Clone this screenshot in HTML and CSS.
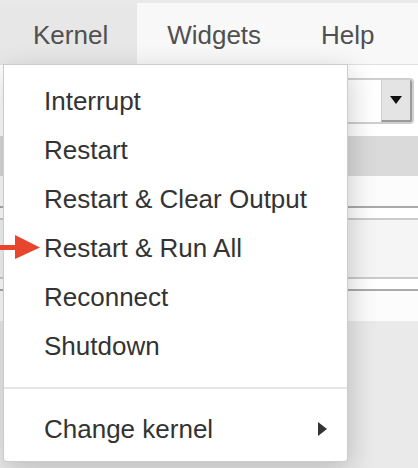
FILE: index.html
```html
<!DOCTYPE html>
<html>
<head>
<meta charset="utf-8">
<link rel="stylesheet" href="styles.css">
</head>
<body>
<div class="page">
  <div class="topline"></div>
  <nav class="navbar">
    <div class="tab open">Kernel
      <ul class="menu">
        <li class="item">Interrupt</li>
        <li class="item">Restart</li>
        <li class="item">Restart &amp; Clear Output</li>
        <li class="item">Restart &amp; Run All</li>
        <li class="item">Reconnect</li>
        <li class="item">Shutdown</li>
        <li class="divider"></li>
        <li class="item submenu"><span>Change kernel</span><span class="caret-right"></span></li>
      </ul>
    </div>
    <div class="tab">Widgets</div>
    <div class="tab">Help</div>
  </nav>
  <div class="toolbar">
    <div class="select">
      <div class="select-field"></div>
      <div class="select-btn"><span class="caret-down"></span></div>
    </div>
  </div>
  <div class="band"></div>
  <div class="cell">
    <div class="gap-top"></div>
    <div class="line-dark"></div>
    <div class="gap-small"></div>
    <div class="line-light"></div>
    <div class="input-area"></div>
    <div class="line-light"></div>
    <div class="gap-small"></div>
    <div class="line-dark"></div>
    <div class="gap-top"></div>
  </div>
  <div class="rest"></div>
</div>
<svg class="pointer" width="42" height="25" viewBox="0 0 42 25">
  <rect x="0" y="10" width="17" height="5" fill="#e8452f"/>
  <polygon points="15,0 40,12.5 15,24" fill="#e8452f"/>
</svg>
</body>
</html>
```

FILE: styles.css
```css
* {
  box-sizing: border-box;
  margin: 0;
  padding: 0;
}

html, body {
  width: 418px;
  height: 468px;
  overflow: hidden;
}

body {
  font-family: "Liberation Sans", Arial, Helvetica, sans-serif;
  background: #eaeaea;
  position: relative;
}

.page {
  display: flex;
  flex-direction: column;
  height: 468px;
}

.topline {
  height: 3px;
  background: #e9e9e9;
}

.navbar {
  display: flex;
  height: 62px;
  background: #f8f8f8;
  border-bottom: 1px solid #e0e0e0;
}

.tab {
  position: relative;
  height: 61px;
  padding: 3px 30px 0 30px;
  line-height: 58px;
  font-size: 26px;
  color: #505050;
}

.tab.open {
  background: #e7e7e7;
  padding-left: 33px;
  padding-right: 29px;
}

.menu {
  position: absolute;
  left: 3px;
  top: 100%;
  width: 345px;
  background: #fff;
  border: 1px solid rgba(0, 0, 0, 0.2);
  border-radius: 0 0 4px 4px;
  box-shadow: 2px 8px 28px rgba(0, 0, 0, 0.2);
  padding: 12px 0 7px;
  list-style: none;
  z-index: 10;
}

.item {
  height: 49px;
  line-height: 49px;
  padding: 0 40px;
  font-size: 26px;
  color: #333;
  white-space: nowrap;
}

.divider {
  height: 2px;
  margin: 16px 0;
  background: #e5e5e5;
}

.submenu {
  display: flex;
  justify-content: space-between;
  align-items: center;
  padding-right: 20px;
}

.caret-right {
  width: 0;
  height: 0;
  border-left: 9px solid #333;
  border-top: 7px solid transparent;
  border-bottom: 7px solid transparent;
  margin-top: -2px;
}

.toolbar {
  height: 71px;
  background: #fff;
  display: flex;
  justify-content: flex-end;
  padding: 13px 4px 0 0;
}

.select {
  width: 300px;
  height: 46px;
  display: flex;
  border: 2px solid #cfcfcf;
  border-radius: 4px;
  background: #fff;
  overflow: hidden;
}

.select-field {
  flex: 1;
}

.select-btn {
  width: 31px;
  background: #e4e4e4;
  border-left: 1px solid #d0d0d0;
  border-right: 2px solid #9a9a9a;
  border-bottom: 2px solid #9a9a9a;
  display: flex;
  align-items: center;
  justify-content: center;
}

.caret-down {
  width: 0;
  height: 0;
  border-top: 8px solid #111;
  border-left: 6px solid transparent;
  border-right: 6px solid transparent;
}

.band {
  height: 40px;
  background: #dadada;
}

.cell {
  background: #fff;
  display: flex;
  flex-direction: column;
}

.gap-top {
  height: 30px;
  background: #fcfcfc;
}

.gap-small {
  height: 10px;
  background: #fff;
}

.line-dark {
  height: 2px;
  background: #aaa;
}

.line-light {
  height: 2px;
  background: #cbcbcb;
}

.input-area {
  height: 57px;
  background: #f5f5f5;
}

.rest {
  flex: 1;
  background: #eaeaea;
}

.pointer {
  position: absolute;
  left: 0;
  top: 235px;
  z-index: 20;
}
```
